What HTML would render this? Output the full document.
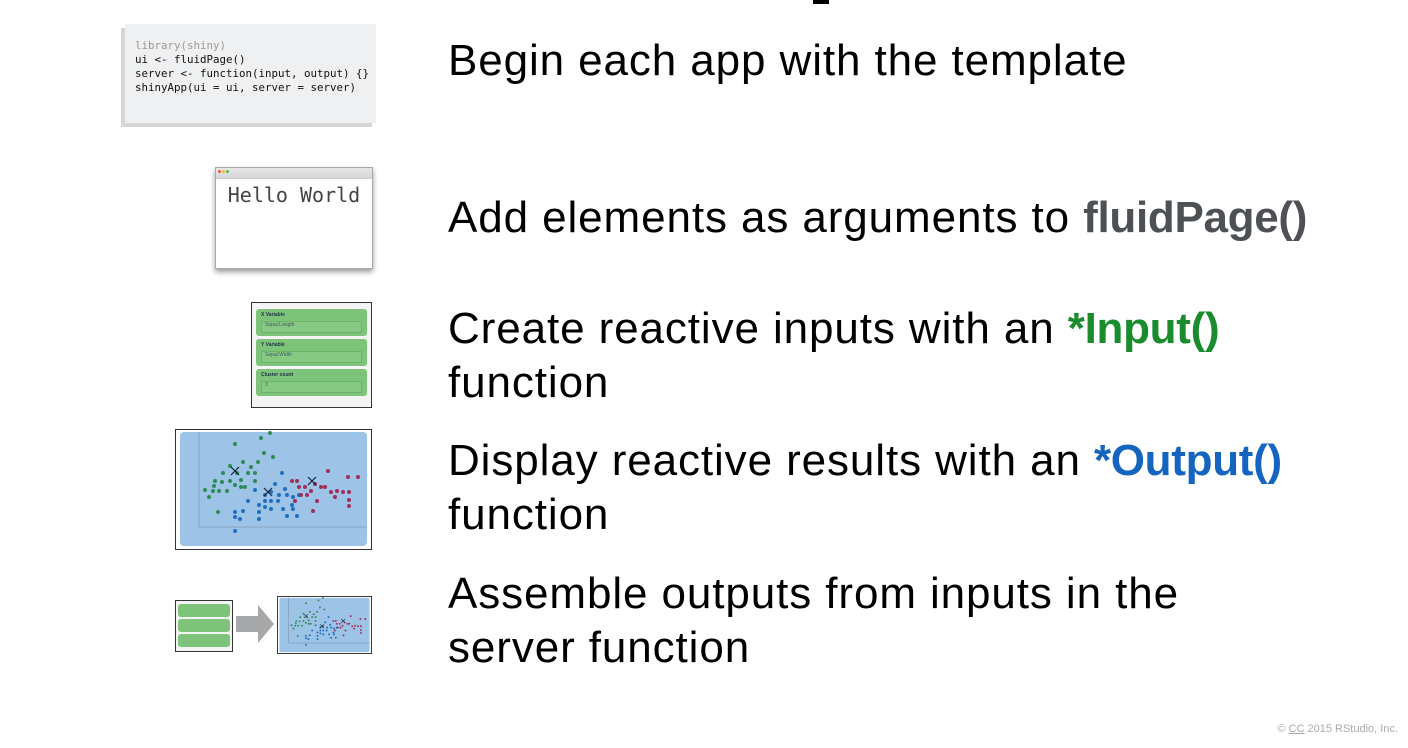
<!DOCTYPE html>
<html><head><meta charset="utf-8"><style>
body{margin:0;width:1408px;height:748px;background:#fff;position:relative;overflow:hidden;font-family:"Liberation Sans",Arial,sans-serif}
.t{position:absolute;left:448px;font-size:44px;letter-spacing:0.9px;line-height:54px;color:#000;white-space:nowrap}
.t b{letter-spacing:-0.3px}
.code{position:absolute;left:125px;top:24px;width:251px;height:99px;background:#eff0f2;box-shadow:-4px 4px 0 #d6d7d9;font-family:"DejaVu Sans Mono","Liberation Mono",monospace;font-size:10.8px;line-height:14px;padding:15px 0 0 10px;box-sizing:border-box;color:#111;white-space:nowrap}
.abs{position:absolute}
.green{background:#7dc47a;border-radius:3px;position:absolute;left:4px;right:4px}
</style></head><body>
<div class="abs" style="left:813px;top:0;width:16px;height:4px;background:#000"></div>

<div class="code"><span style="color:#999">library(shiny)</span><br>ui &lt;- fluidPage()<br>server &lt;- function(input, output) {}<br>shinyApp(ui = ui, server = server)</div>

<div class="abs" style="left:215px;top:167px;width:156px;height:100px;background:#fff;border:1px solid #aaa;box-shadow:0 3px 5px rgba(0,0,0,.4)">
 <div style="height:10px;background:linear-gradient(#e6e6e6,#d6d6d6);border-bottom:1px solid #ccc;position:relative">
  <span style="position:absolute;left:2px;top:2px;width:3px;height:3px;border-radius:50%;background:#e55"></span>
  <span style="position:absolute;left:6px;top:2px;width:3px;height:3px;border-radius:50%;background:#eb3"></span>
  <span style="position:absolute;left:10px;top:2px;width:3px;height:3px;border-radius:50%;background:#5b5"></span>
 </div>
 <div style="font-family:'DejaVu Sans Mono',monospace;font-size:20px;color:#444;text-align:center;margin-top:4px">Hello World</div>
</div>

<div class="abs" style="left:251px;top:302px;width:119px;height:104px;border:1px solid #333;background:#f4f4f4">
 <div class="green" style="top:6px;height:27px"><div style="font-size:5px;font-weight:bold;margin:3px 5px;color:#234">X Variable</div><div style="margin:0 5px;height:10px;background:#86c983;border:1px solid #6ab567;font-size:5px;color:#456;padding-left:3px">Sepal.Length</div></div>
 <div class="green" style="top:36px;height:27px"><div style="font-size:5px;font-weight:bold;margin:3px 5px;color:#234">Y Variable</div><div style="margin:0 5px;height:10px;background:#86c983;border:1px solid #6ab567;font-size:5px;color:#456;padding-left:3px">Sepal.Width</div></div>
 <div class="green" style="top:66px;height:27px"><div style="font-size:5px;font-weight:bold;margin:3px 5px;color:#234">Cluster count</div><div style="margin:0 5px;height:10px;background:#86c983;border:1px solid #6ab567;font-size:5px;color:#456;padding-left:3px">3</div></div>
</div>

<svg class="abs" style="left:175px;top:429px" width="197" height="121" viewBox="0 0 197 121">
<defs><g id="pts">
<g fill="#2e8b57">
<circle cx="60" cy="15" r="2"/><circle cx="68" cy="33" r="2"/><circle cx="55" cy="37" r="2"/><circle cx="62" cy="44" r="2"/><circle cx="48" cy="44" r="2"/><circle cx="40" cy="52" r="2"/><circle cx="47" cy="53" r="2"/><circle cx="55" cy="52" r="2"/><circle cx="66" cy="51" r="2"/><circle cx="73" cy="44" r="2"/><circle cx="83" cy="33" r="2"/><circle cx="89" cy="24" r="2"/><circle cx="30" cy="61" r="2"/><circle cx="38" cy="62" r="2"/><circle cx="44" cy="62" r="2"/><circle cx="52" cy="62" r="2"/><circle cx="60" cy="56" r="2"/><circle cx="34" cy="68" r="2"/><circle cx="39" cy="57" r="2"/><circle cx="76" cy="38" r="2"/><circle cx="80" cy="44" r="2"/><circle cx="86" cy="9" r="2"/><circle cx="95" cy="4" r="2"/><circle cx="98" cy="28" r="2"/><circle cx="43" cy="83" r="2"/><circle cx="66" cy="58" r="2"/><circle cx="70" cy="58" r="2"/><circle cx="80" cy="52" r="2"/>
</g>
<g fill="#1f6fc0">
<circle cx="107" cy="44" r="2"/><circle cx="100" cy="55" r="2"/><circle cx="96" cy="63" r="2"/><circle cx="90" cy="66" r="2"/><circle cx="90" cy="72" r="2"/><circle cx="96" cy="72" r="2"/><circle cx="104" cy="66" r="2"/><circle cx="110" cy="60" r="2"/><circle cx="112" cy="66" r="2"/><circle cx="118" cy="68" r="2"/><circle cx="124" cy="66" r="2"/><circle cx="84" cy="76" r="2"/><circle cx="84" cy="83" r="2"/><circle cx="84" cy="90" r="2"/><circle cx="96" cy="80" r="2"/><circle cx="103" cy="72" r="2"/><circle cx="108" cy="80" r="2"/><circle cx="117" cy="76" r="2"/><circle cx="73" cy="72" r="2"/><circle cx="68" cy="82" r="2"/><circle cx="60" cy="83" r="2"/><circle cx="60" cy="88" r="2"/><circle cx="65" cy="90" r="2"/><circle cx="60" cy="102" r="2"/><circle cx="112" cy="87" r="2"/><circle cx="122" cy="87" r="2"/><circle cx="118" cy="80" r="2"/><circle cx="80" cy="61" r="2"/><circle cx="90" cy="78" r="2"/>
</g>
<g fill="#a0305a">
<circle cx="117" cy="52" r="2"/><circle cx="122" cy="52" r="2"/><circle cx="124" cy="58" r="2"/><circle cx="130" cy="58" r="2"/><circle cx="136" cy="62" r="2"/><circle cx="140" cy="55" r="2"/><circle cx="146" cy="58" r="2"/><circle cx="150" cy="58" r="2"/><circle cx="156" cy="63" r="2"/><circle cx="160" cy="68" r="2"/><circle cx="168" cy="63" r="2"/><circle cx="174" cy="63" r="2"/><circle cx="174" cy="71" r="2"/><circle cx="174" cy="77" r="2"/><circle cx="183" cy="48" r="2"/><circle cx="173" cy="48" r="2"/><circle cx="153" cy="42" r="2"/><circle cx="126" cy="66" r="2"/><circle cx="132" cy="66" r="2"/><circle cx="142" cy="72" r="2"/><circle cx="162" cy="62" r="2"/><circle cx="138" cy="82" r="2"/><circle cx="120" cy="72" r="2"/>
</g>
<g stroke="#123" stroke-width="1.2"><path d="M56 38l8 8M64 38l-8 8M89 59l8 8M97 59l-8 8M133 48l8 8M141 48l-8 8"/></g>
</g></defs>
<rect x="0.5" y="0.5" width="196" height="120" fill="#fff" stroke="#333"/>
<rect x="5" y="3" width="187" height="114" rx="4" fill="#9dc3e6"/>
<line x1="24" y1="3" x2="24" y2="98" stroke="#789" stroke-width=".6"/><line x1="24" y1="98" x2="192" y2="98" stroke="#789" stroke-width=".6"/>
<use href="#pts"/>
</svg>

<div class="abs" style="left:175px;top:600px;width:56px;height:50px;border:1px solid #333;background:#f4f4f4">
 <div class="green" style="left:2px;right:2px;top:3px;height:13px"></div>
 <div class="green" style="left:2px;right:2px;top:18px;height:13px"></div>
 <div class="green" style="left:2px;right:2px;top:33px;height:13px"></div>
</div>
<svg class="abs" style="left:234px;top:603px" width="42" height="42"><path d="M2 13h22V2l16 19-16 19V29H2z" fill="#a7a8aa"/></svg>
<svg class="abs" style="left:277px;top:596px" width="95" height="58" viewBox="0 0 197 121" preserveAspectRatio="none">
<rect x="1" y="1" width="195" height="119" fill="#fff" stroke="#333" stroke-width="2"/>
<rect x="5" y="4" width="187" height="113" rx="4" fill="#9dc3e6"/>
<line x1="24" y1="3" x2="24" y2="98" stroke="#789"/><line x1="24" y1="98" x2="192" y2="98" stroke="#789"/>
<use href="#pts"/>
</svg>

<div class="t" style="top:34px">Begin each app with the template</div>
<div class="t" style="top:191px">Add elements as arguments to <b style="color:#4d5054">fluidPage()</b></div>
<div class="t" style="top:302px">Create reactive inputs with an <b style="color:#1a8c2e">*Input()</b><br>function</div>
<div class="t" style="top:434px">Display reactive results with an <b style="color:#1565c0">*Output()</b><br>function</div>
<div class="t" style="top:567px">Assemble outputs from inputs in the<br>server function</div>
<div class="abs" style="right:10px;top:723px;font-size:11px;color:#aaa">© <u>CC</u> 2015 RStudio, Inc.</div>
</body></html>
